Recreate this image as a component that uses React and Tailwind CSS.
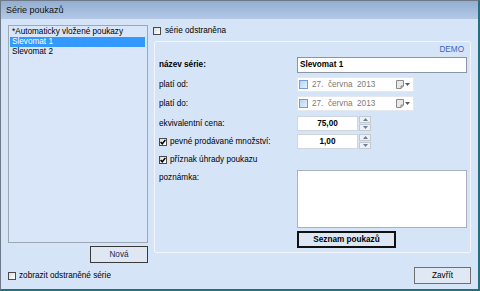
import React from 'react';

const Check = ({ checked }) => (
    <span className="w-[8px] h-[8px] shrink-0 border border-[#4a4a4a] bg-linear-to-br from-[#dcdcdc] to-white flex items-center justify-center">
        {checked && (
            <svg width="6" height="6" viewBox="0 0 6 6">
                <path d="M0.6 3 L2.3 4.8 L5.4 0.9" fill="none" stroke="#000" strokeWidth="1.5" />
            </svg>
        )}
    </span>
);

const DateBox = () => (
    <div className="w-[117px] h-[15px] bg-white border border-[#e3e8ef] flex items-center pl-[1px] pr-[3px]">
        <span className="w-[9px] h-[9px] border border-[#6f9fd8] bg-linear-to-br from-[#b9d3f2] to-[#e6f0fc] shrink-0" />
        <span className="ml-[4px] text-[#7a7a7a] whitespace-pre">27.  června  2013</span>
        <span className="ml-auto flex items-center gap-[1px]">
            <svg width="8" height="9" viewBox="0 0 8 9">
                <path d="M0.5 0.5 H7.5 V6 L5 8.5 H0.5 Z" fill="#e8e8e8" stroke="#8a8a8a" />
                <path d="M5 8.5 V6 H7.5" fill="#bdbdbd" stroke="#8a8a8a" />
            </svg>
            <svg width="5" height="3" viewBox="0 0 5 3">
                <path d="M0 0 H5 L2.5 3 Z" fill="#4a5a70" />
            </svg>
        </span>
    </div>
);

const Spin = ({ value }) => (
    <div className="flex items-center gap-[1px]">
        <div className="w-[61px] h-[15px] bg-white border border-[#d0d6de] flex items-center justify-center font-bold">{value}</div>
        <div className="w-[12px] h-[15px] flex flex-col">
            <span className="h-[7px] border border-[#c4c9d0] bg-[#eef1f5] flex items-center justify-center">
                <svg width="5" height="3" viewBox="0 0 5 3"><path d="M0 3 H5 L2.5 0 Z" fill="#6b7f9a" /></svg>
            </span>
            <span className="h-[7px] mt-[1px] border border-[#c4c9d0] bg-[#eef1f5] flex items-center justify-center">
                <svg width="5" height="3" viewBox="0 0 5 3"><path d="M0 0 H5 L2.5 3 Z" fill="#6b7f9a" /></svg>
            </span>
        </div>
    </div>
);

export default function App() {
    return (
        <div className="w-[480px] h-[291px] overflow-hidden flex flex-col bg-[#d6e4f8] border-t border-l border-[#6d7888] border-r-[2px] border-r-[#23707e] border-b-[2px] border-b-[#23707e] font-['Liberation_Sans',Arial,sans-serif] text-[8.2px] leading-[10px] text-black">
            {/* title bar */}
            <div className="h-[18px] shrink-0 bg-linear-to-b from-[#93aed2] to-[#b3c8e5] flex items-center pl-[5px] text-[9px] text-[#111]">
                Série poukazů
            </div>

            <div className="flex">
                {/* left column */}
                <div className="ml-[7px] pt-[6px] w-[140px] flex flex-col">
                    <div className="h-[218px] border border-[#9ea8b5] bg-[#d9e6f9] p-[1px] flex flex-col">
                        <div className="h-[10px] pl-[2px] flex items-center">*Automaticky vložené poukazy</div>
                        <div className="h-[10px] pl-[2px] flex items-center bg-[#3399ff] text-white mr-[1px]">Slevomat 1</div>
                        <div className="h-[10px] pl-[2px] flex items-center">Slevomat 2</div>
                    </div>
                    <button className="self-end mt-[3px] w-[58px] h-[17px] border border-[#3a3a3a] bg-[#dfe7f3] text-[#1a2a50] flex items-center justify-center">
                        Nová
                    </button>
                </div>

                {/* right column */}
                <div className="ml-[5px] pt-[6px] flex flex-col">
                    <div className="h-[12px] flex items-center gap-[4px]">
                        <Check />
                        <span>série odstraněna</span>
                    </div>
                    <div className="mt-[4px] ml-[1px] w-[317px] border border-[#f2f6fc] rounded-[2px] pl-[4px] pb-[4px] flex flex-col">
                        <div className="h-[15px] flex items-center justify-end pr-[6px] text-[#3a66c4]">DEMO</div>

                        <div className="h-[16px] flex items-center">
                            <span className="w-[138px] font-bold">název série:</span>
                            <div className="w-[170px] h-[16px] bg-white border border-[#8c95a2] flex items-center pl-[2px] font-bold">Slevomat 1</div>
                        </div>

                        <div className="mt-[4px] h-[15px] flex items-center">
                            <span className="w-[138px]">platí od:</span>
                            <DateBox />
                        </div>

                        <div className="mt-[4px] h-[15px] flex items-center">
                            <span className="w-[138px]">platí do:</span>
                            <DateBox />
                        </div>

                        <div className="mt-[5px] h-[15px] flex items-center">
                            <span className="w-[138px]">ekvivalentní cena:</span>
                            <Spin value="75,00" />
                        </div>

                        <div className="mt-[3px] h-[15px] flex items-center">
                            <span className="w-[138px] flex items-center gap-[3px]">
                                <Check checked />
                                <span>pevné prodávané množství:</span>
                            </span>
                            <Spin value="1,00" />
                        </div>

                        <div className="mt-[5px] h-[12px] flex items-center gap-[3px]">
                            <Check checked />
                            <span>příznak úhrady poukazu</span>
                        </div>

                        <div className="mt-[4px] flex">
                            <span className="w-[138px] pt-[3px]">poznámka:</span>
                            <div className="w-[170px] h-[58px] bg-white border border-[#a9b1bc]" />
                        </div>

                        <div className="mt-[3px] flex">
                            <span className="w-[138px]" />
                            <button className="w-[99px] h-[17px] border-2 border-[#111] bg-[#dde6f3] font-bold flex items-center justify-center">
                                Seznam poukazů
                            </button>
                        </div>
                    </div>
                </div>
            </div>

            {/* bottom row */}
            <div className="mt-[4px] h-[17px] flex items-center pl-[7px] pr-[7px]">
                <span className="flex items-center gap-[3px]">
                    <Check />
                    <span>zobrazit odstraněné série</span>
                </span>
                <button className="ml-auto w-[57px] h-[17px] border border-[#6f6f6f] bg-[#e0e8f3] flex items-center justify-center">
                    Zavřít
                </button>
            </div>
        </div>
    );
}
